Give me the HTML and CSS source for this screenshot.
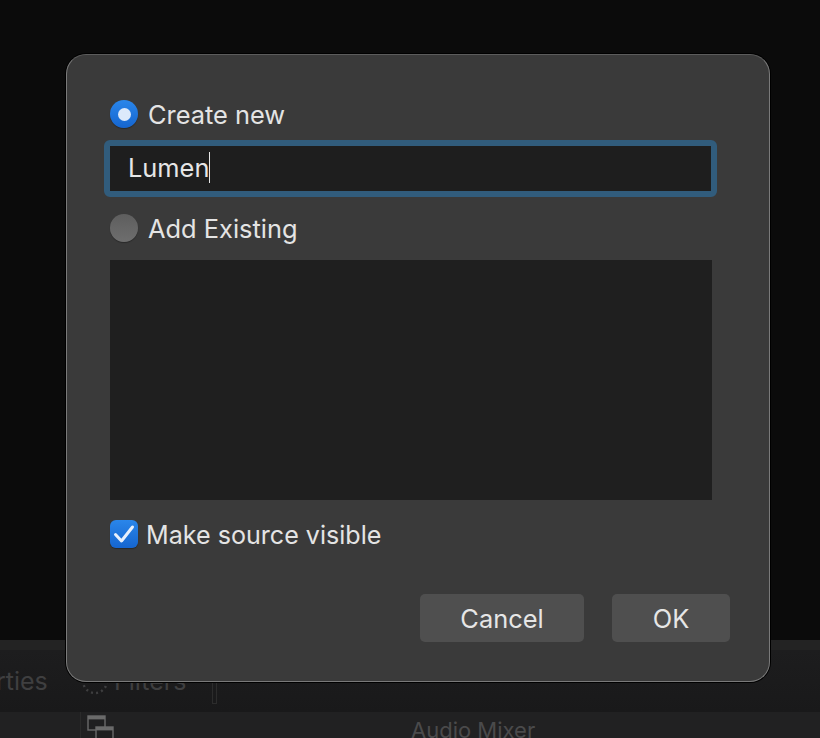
FILE: index.html
```html
<!DOCTYPE html>
<html lang="en">
  <head>
    <meta charset="UTF-8" />
    <meta name="viewport" content="width=device-width, initial-scale=1.0" />
    <title>Create new</title>
    <link rel="stylesheet" href="styles.css">
  </head>
  <body>
    <div class="window">
      <div class="preview"></div>
      <div class="strip"></div>
      <div class="tabs">
        <span class="tab-props">rties</span>
        <span class="tab-filters">
          <svg class="filters-icon" width="30" height="30" viewBox="0 0 30 30">
            <circle cx="15" cy="15" r="12" fill="none" stroke="#3f3f40" stroke-width="2.4" stroke-dasharray="2 3.2" />
          </svg>
          Filters
        </span>
        <span class="tab-sep"></span>
      </div>
      <div class="docks">
        <div class="dock-left"></div>
        <div class="dock-main">
          <svg class="mixer-icon" width="27" height="26" viewBox="0 0 27 26">
            <rect x="1" y="1" width="17" height="14" fill="#1f1f20" stroke="#6a6a6a" stroke-width="1.4" />
            <rect x="1" y="1" width="17" height="3.4" fill="#6a6a6a" />
            <rect x="9" y="12" width="17" height="14" fill="#1f1f20" stroke="#6a6a6a" stroke-width="1.4" />
            <rect x="9" y="12" width="17" height="3.4" fill="#6a6a6a" />
          </svg>
          <span class="mixer-title">Audio Mixer</span>
        </div>
      </div>
    </div>

    <form class="dialog">
      <label class="option option-first">
        <span class="radio radio-on"></span>
        Create new
      </label>
      <div class="name-field">Lumen<span class="caret"></span></div>
      <label class="option option-second">
        <span class="radio"></span>
        Add Existing
      </label>
      <div class="source-list"></div>
      <label class="visible-row">
        <span class="checkbox">
          <svg width="22" height="20" viewBox="0 0 22 20">
            <path d="M2.5 10.5 L8.5 17 L19.5 3" fill="none" stroke="#e8f0fc" stroke-width="3" stroke-linecap="round" stroke-linejoin="round" />
          </svg>
        </span>
        Make source visible
      </label>
      <div class="buttons">
        <button type="button" class="btn btn-cancel">Cancel</button>
        <button type="button" class="btn btn-ok">OK</button>
      </div>
    </form>
  </body>
</html>
```

FILE: styles.css
```css
html,
body {
  margin: 0;
  height: 738px;
  overflow: hidden;
  background-color: #0c0c0c;
}
body {
  font-family: Inter, "Noto Sans", sans-serif;
  position: relative;
}
.window {
  display: flex;
  flex-direction: column;
  height: 738px;
}
.preview {
  flex: none;
  height: 640px;
  background-color: #0b0b0b;
}
.strip {
  flex: none;
  height: 10px;
  background-color: #232323;
}
.tabs {
  flex: none;
  height: 62px;
  background: linear-gradient(#1d1d1e, #19191a);
  display: flex;
  align-items: center;
  color: #3f3f40;
  font-size: 25px;
}
.tab-props {
  margin-left: -4px;
  width: 84px;
}
.tab-filters {
  display: flex;
  align-items: center;
  gap: 4px;
  width: 132px;
}
.tab-sep {
  width: 5px;
  height: 30px;
  margin-top: 16px;
  border: 1px solid #2c2c2c;
  box-sizing: border-box;
}
.docks {
  flex: none;
  height: 26px;
  display: flex;
  background-color: #212122;
  overflow: hidden;
}
.dock-left {
  width: 80px;
  border-right: 1px solid #2b2b2b;
}
.dock-main {
  flex: 1;
  display: flex;
  padding: 3px 0 0 6px;
  color: #4a4a4b;
  font-size: 22px;
  line-height: 30px;
}
.mixer-title {
  margin-left: 297px;
}

.dialog {
  position: absolute;
  left: 66px;
  top: 54px;
  width: 704px;
  height: 628px;
  box-sizing: border-box;
  padding: 45px 43px 0 43px;
  background-color: #3a3a3a;
  border: 1px solid #7a7a7a;
  border-top-color: #5c5c5c;
  border-radius: 20px;
  box-shadow: 0 0 0 1px #000;
  color: #e4e4e4;
  font-size: 25.4px;
  display: flex;
  flex-direction: column;
}
.option {
  display: flex;
  align-items: center;
  gap: 10px;
  height: 28px;
}
.radio {
  width: 28px;
  height: 28px;
  border-radius: 50%;
  background: linear-gradient(#5e5e5e, #6e6e6e);
  box-sizing: border-box;
  box-shadow: 0 1px 1px rgba(0, 0, 0, 0.3);
}
.radio-on {
  background: linear-gradient(#2a86ea, #1565cf);
  display: flex;
  align-items: center;
  justify-content: center;
}
.radio-on::after {
  content: "";
  width: 13px;
  height: 13px;
  border-radius: 50%;
  background-color: #dce9fb;
}
.name-field {
  margin: 12px 0 0 -6px;
  width: 613px;
  height: 57px;
  box-sizing: border-box;
  border: 6px solid #315c7c;
  border-radius: 6px;
  background-color: #1e1e1e;
  padding: 0 0 2px 18px;
  display: flex;
  align-items: center;
  color: #e6e6e6;
}
.caret {
  width: 1px;
  height: 31px;
  background-color: #e6e6e6;
}
.option-second {
  margin-top: 17px;
}
.source-list {
  flex: none;
  margin-top: 18px;
  width: 602px;
  height: 240px;
  background-color: #1f1f1f;
}
.visible-row {
  display: flex;
  align-items: center;
  gap: 8px;
  margin-top: 20px;
  height: 30px;
  font-size: 25.1px;
}
.checkbox {
  align-self: flex-start;
  width: 28px;
  height: 28px;
  border-radius: 6px;
  background: linear-gradient(#2a86ea, #1565cf);
  box-shadow: 0 1px 1px rgba(0, 0, 0, 0.3);
  display: flex;
  align-items: center;
  justify-content: center;
}
.buttons {
  display: flex;
  justify-content: flex-end;
  gap: 28px;
  margin: 44px -4px 0 0;
}
.btn {
  height: 48px;
  border: none;
  border-radius: 5px;
  background-color: #4f4f4f;
  color: #e6e6e6;
  font-family: inherit;
  font-size: 25.4px;
  padding: 0;
}
.btn-cancel {
  width: 164px;
}
.btn-ok {
  width: 118px;
}
```
